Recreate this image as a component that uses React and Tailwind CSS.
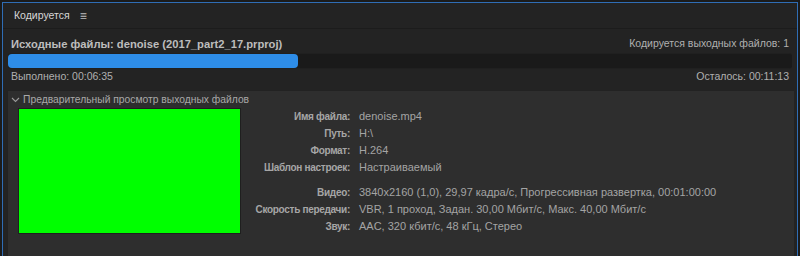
export default function App() {
  const rows1 = [
    ["Имя файла:", "denoise.mp4"],
    ["Путь:", "H:\\"],
    ["Формат:", "H.264"],
    ["Шаблон настроек:", "Настраиваемый"],
  ];
  const rows2 = [
    ["Видео:", "3840x2160 (1,0), 29,97 кадра/с, Прогрессивная развертка, 00:01:00:00"],
    ["Скорость передачи:", "VBR, 1 проход, Задан. 30,00 Мбит/с, Макс. 40,00 Мбит/с"],
    ["Звук:", "AAC, 320 кбит/с, 48 кГц, Стерео"],
  ];
  const Row = ({ l, v }) => (
    <div className="flex h-[17px] items-center">
      <span className="w-[101px] text-right text-[10px] tracking-[-0.3px] font-bold text-[#a6a6a6] whitespace-nowrap">{l}</span>
      <span className="ml-[9px] text-[11px] text-[#a4a4a4] whitespace-nowrap">{v}</span>
    </div>
  );
  return (
    <div
      className="w-[800px] h-[256px] overflow-hidden bg-[#1b1b1b] pt-[2px] px-[2px]"
      style={{ fontFamily: '"Liberation Sans", Arial, sans-serif' }}
    >
      <div className="h-[260px] border-t border-x border-[#2f6db5] bg-[#232323] flex flex-col">
        <div className="h-[26px] flex items-center pl-[11px] border-b border-[#1c1c1c]">
          <span className="text-[10.5px] text-[#d6d6d6]">Кодируется</span>
          <span className="ml-[10px] text-[12px] text-[#bdbdbd]">≡</span>
        </div>
        <div className="px-[5px] pt-[8px]">
          <div className="flex justify-between items-center h-[14px] px-[3px]">
            <span className="text-[11.2px] font-bold text-[#bdbdbd]">
              Исходные файлы: denoise (2017_part2_17.prproj)
            </span>
            <span className="text-[10.5px] text-[#b0b0b0]">Кодируется выходных файлов: 1</span>
          </div>
          <div className="mt-[2px] h-[16px] bg-[#1a1a1a] rounded-[3px] border-y border-[#202020]">
            <div className="h-full w-[290px] bg-[#2e8de8] rounded-[4px]" />
          </div>
          <div className="flex justify-between items-center h-[14px] mt-[1px] px-[3px]">
            <span className="text-[10.5px] text-[#b0b0b0]">Выполнено: 00:06:35</span>
            <span className="text-[10.5px] text-[#b0b0b0]">Осталось: 00:11:13</span>
          </div>
        </div>
        <div className="mt-[6px] ml-[4px] mr-[3px] flex-1 bg-[#2e2e2e] border-l border-t border-[#222]">
          <div className="flex items-center h-[16px] pl-[3px] translate-y-[1px]">
            <svg width="9" height="6" viewBox="0 0 9 6" className="mr-[3px]">
              <path d="M1 1 L4.5 4.5 L8 1" stroke="#9a9a9a" strokeWidth="1.1" fill="none" />
            </svg>
            <span className="text-[10.3px] text-[#a8a8a8]">Предварительный просмотр выходных файлов</span>
          </div>
          <div className="flex pl-[10px] pt-[1px]">
            <div className="w-[223px] h-[126px] bg-[#00ff00] border border-[#1f1f1f]" />
            <div className="ml-[8px] flex flex-col">
              {rows1.map(([l, v]) => <Row key={l} l={l} v={v} />)}
              <div className="h-[8px]" />
              {rows2.map(([l, v]) => <Row key={l} l={l} v={v} />)}
            </div>
          </div>
        </div>
      </div>
    </div>
  );
}
